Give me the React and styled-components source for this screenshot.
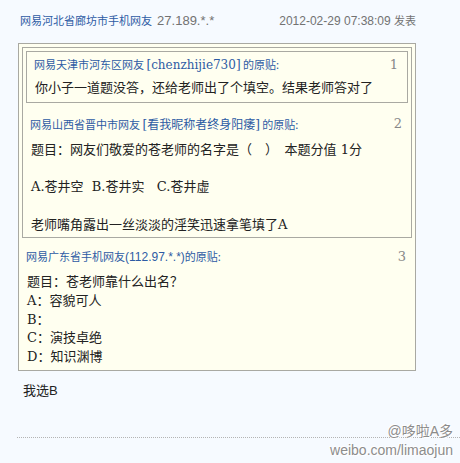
import React from "react";
import styled, { createGlobalStyle } from "styled-components";

const blue = "#2d5ba4";
const grey = "#727272";
const cjk = `"Noto Sans CJK SC", sans-serif`;
const serif = `"DejaVu Serif", "Noto Sans CJK SC", serif`;
const sans = `"Liberation Sans", "Noto Sans CJK SC", sans-serif`;

const GlobalStyle = createGlobalStyle`
  body {
    margin: 0;
    background: #f6faff;
  }
`;

const Page = styled.div`
  position: relative;
  box-sizing: border-box;
  width: 460px;
  height: 463px;
  padding: 10px 0 0 18px;
  font-family: ${serif};
  overflow: hidden;
`;

const Thread = styled.div`
  width: 398px;
`;

const TopRow = styled.div`
  display: flex;
  justify-content: space-between;
  align-items: baseline;
  line-height: 20px;
  padding-left: 2px;
`;

const Author = styled.span`
  font-family: ${cjk};
  font-size: 11px;
  color: ${(p) => p.$color || blue};
`;

const Ip = styled.span`
  font-family: ${sans};
  font-size: 13px;
  color: ${grey};
`;

const Time = styled.span`
  font-family: ${sans};
  font-size: 12px;
  color: ${grey};
`;

const Quote = styled.div`
  border: 1px solid #a9a9a2;
  background: #fffff0;
  padding: 3px;
  margin-top: ${(p) => (p.$outer ? "12px" : "0")};
`;

const QuoteHead = styled.div`
  display: flex;
  justify-content: space-between;
  align-items: center;
  line-height: 20px;
  padding: 0 6px 0 4px;
  margin-top: ${(p) => p.$gap ?? 11}px;
  font-family: ${cjk};
  font-size: 11px;
  color: ${blue};
`;

const Nick = styled.span`
  font-family: ${serif};
  font-size: 12px;
`;

const NickSans = styled.span`
  font-family: ${sans};
  font-size: 12px;
`;

const Floor = styled.span`
  font-family: "DejaVu Serif", serif;
  font-size: 13px;
  color: #888;
`;

const Body = styled.div`
  padding-left: 5px;
  margin: ${(p) => (p.$first ? "4px 0 1px" : "6px 0 0")};
  font-size: 13px;
  line-height: 18.7px;
  color: #222;
`;

const Line = styled.div`
  min-height: 18.7px;
  white-space: pre;
`;

const Reply = styled.div`
  margin-top: 10px;
  padding-left: 5px;
  font-family: ${sans};
  font-size: 13px;
  line-height: 19px;
  color: #222;
`;

const Divider = styled.div`
  margin: 37px 0 0 -1px;
  border-top: 1px dotted #b4b4b4;
`;

const Watermark = styled.div`
  position: absolute;
  right: 7px;
  bottom: 3px;
  text-align: right;
  font-family: ${sans};
  font-size: 14px;
  line-height: 19px;
  color: #8c8c8c;
  text-shadow: 0 0 1px #fff, 0 0 1px #fff, 1px 1px 0 #fff, -1px -1px 0 #fff;
`;

export default function App() {
  return (
    <Page>
      <GlobalStyle />
      <Thread>
        <TopRow>
          <span>
            <Author>网易河北省廊坊市手机网友</Author> <Ip>27.189.*.*</Ip>
          </span>
          <Time>
            2012-02-29 07:38:09 <Author $color={grey}>发表</Author>
          </Time>
        </TopRow>

        <Quote $outer>
          <Quote>
            <Quote>
              <QuoteHead $gap={-1}>
                <span>
                  网易天津市河东区网友 <Nick>[chenzhijie730]</Nick> 的原贴:
                </span>
                <Floor>1</Floor>
              </QuoteHead>
              <Body $first>
                <Line>你小子一道题没答，还给老师出了个填空。结果老师答对了</Line>
              </Body>
            </Quote>
            <QuoteHead>
              <span>
                网易山西省晋中市网友 <Nick>[看我昵称者终身阳痿]</Nick> 的原贴:
              </span>
              <Floor>2</Floor>
            </QuoteHead>
            <Body>
              <Line>题目：网友们敬爱的苍老师的名字是（　）　本题分值 1分</Line>
              <Line> </Line>
              <Line>A.苍井空  B.苍井实   C.苍井虚</Line>
              <Line> </Line>
              <Line>老师嘴角露出一丝淡淡的淫笑迅速拿笔填了A</Line>
            </Body>
          </Quote>
          <QuoteHead $gap={8}>
            <span>
              网易广东省手机网友<NickSans>(112.97.*.*)</NickSans>的原贴:
            </span>
            <Floor>3</Floor>
          </QuoteHead>
          <Body>
            <Line>题目：苍老师靠什么出名？</Line>
            <Line>A：容貌可人</Line>
            <Line>B：</Line>
            <Line>C：演技卓绝</Line>
            <Line>D：知识渊博</Line>
          </Body>
        </Quote>
      </Thread>

      <Reply>我选B</Reply>
      <Divider />

      <Watermark>
        <div>@哆啦A多</div>
        <div>weibo.com/limaojun</div>
      </Watermark>
    </Page>
  );
}
